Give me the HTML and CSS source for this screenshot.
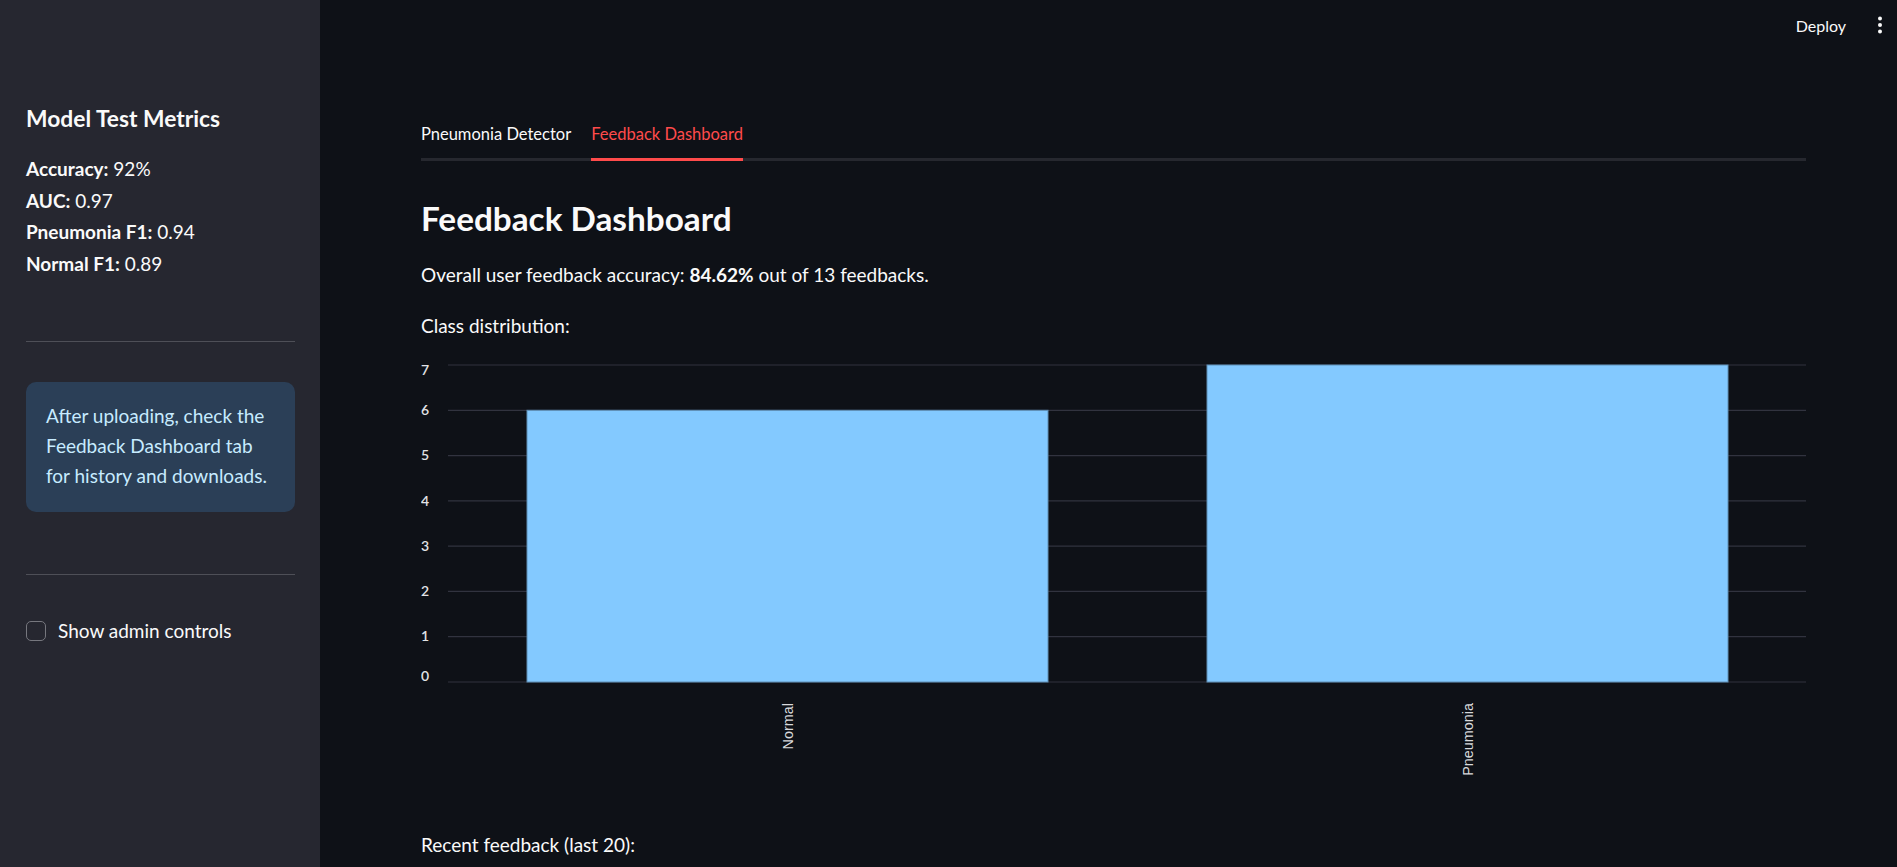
FILE: index.html
```html
<!DOCTYPE html>
<html lang="en">
<head>
<meta charset="utf-8">
<title>Feedback Dashboard</title>
<link rel="stylesheet" href="styles.css">
</head>
<body>
<div class="app">
  <aside class="sidebar">
    <h3 class="side-title">Model Test Metrics</h3>
    <div class="metrics">
      <div><b>Accuracy:</b> 92%</div>
      <div><b>AUC:</b> 0.97</div>
      <div><b>Pneumonia F1:</b> 0.94</div>
      <div><b>Normal F1:</b> 0.89</div>
    </div>
    <hr class="divider first">
    <div class="info">After uploading, check the Feedback Dashboard tab for history and downloads.</div>
    <hr class="divider second">
    <label class="check"><span class="box"></span><span>Show admin controls</span></label>
  </aside>
  <main class="main">
    <header class="header">
      <span class="deploy">Deploy</span>
      <svg class="menu" width="6" height="20" viewBox="0 0 6 20"><circle cx="3" cy="2.5" r="2" fill="#fafafa"/><circle cx="3" cy="9" r="2" fill="#fafafa"/><circle cx="3" cy="15.5" r="2" fill="#fafafa"/></svg>
    </header>
    <section class="content">
      <nav class="tabs">
        <span class="tab">Pneumonia Detector</span>
        <span class="tab active">Feedback Dashboard</span>
      </nav>
      <h3 class="title">Feedback Dashboard</h3>
      <p class="para p1">Overall user feedback accuracy: <b>84.62%</b> out of 13 feedbacks.</p>
      <p class="para p2">Class distribution:</p>
      <svg class="chart" width="1385" height="440" viewBox="0 0 1385 440">
        <g class="grid" stroke="#31333f" stroke-width="1.2">
          <line x1="27" x2="1385" y1="20" y2="20"/>
          <line x1="27" x2="1385" y1="65.3" y2="65.3"/>
          <line x1="27" x2="1385" y1="110.6" y2="110.6"/>
          <line x1="27" x2="1385" y1="155.9" y2="155.9"/>
          <line x1="27" x2="1385" y1="201.1" y2="201.1"/>
          <line x1="27" x2="1385" y1="246.4" y2="246.4"/>
          <line x1="27" x2="1385" y1="291.7" y2="291.7"/>
          <line x1="27" x2="1385" y1="337" y2="337"/>
        </g>
        <g class="ylabels" text-anchor="end">
          <text x="8" y="30">7</text>
          <text x="8" y="70">6</text>
          <text x="8" y="115.3">5</text>
          <text x="8" y="160.6">4</text>
          <text x="8" y="205.8">3</text>
          <text x="8" y="251.1">2</text>
          <text x="8" y="296.4">1</text>
          <text x="8" y="335.5">0</text>
        </g>
        <rect x="106" y="65.3" width="521" height="271.7" fill="#83c9ff" stroke="#5f8fb5" stroke-width="1"/>
        <rect x="786" y="20" width="521" height="317" fill="#83c9ff" stroke="#5f8fb5" stroke-width="1"/>
        <g class="xlabels" text-anchor="end">
          <text transform="translate(371.5 358) rotate(-90)">Normal</text>
          <text transform="translate(1052 358) rotate(-90)">Pneumonia</text>
        </g>
      </svg>
      <p class="para p3">Recent feedback (last 20):</p>
    </section>
  </main>
</div>
</body>
</html>
```
FILE: styles.css
```css
html, body {
  margin: 0;
  padding: 0;
  height: 100%;
}
body {
  background: #0e1117;
  color: #fafafa;
  font-family: Lato, "Noto Sans", sans-serif;
  overflow: hidden;
}
.app {
  display: flex;
  height: 867px;
}
.sidebar {
  width: 320px;
  flex: none;
  box-sizing: border-box;
  background: #262730;
  padding: 103px 25px 0 26px;
  display: flex;
  flex-direction: column;
}
.side-title {
  margin: 0;
  font-size: 22.8px;
  line-height: 30px;
  font-weight: 700;
}
.metrics {
  margin-top: 20px;
  font-size: 19px;
  line-height: 31.6px;
}
.metrics b { font-weight: 700; }
.divider {
  border: 0;
  height: 1px;
  background: #4e4f57;
  margin: 0;
}
.divider.first { margin-top: 62px; }
.info {
  margin-top: 40px;
  background: #2b3f57;
  color: #c7ebff;
  border-radius: 10px;
  padding: 19px 18px 21px 20px;
  font-size: 19px;
  line-height: 30px;
}
.divider.second { margin-top: 62px; }
.check {
  margin-top: 46px;
  display: flex;
  align-items: center;
  gap: 12px;
  font-size: 19px;
  line-height: 20px;
}
.check .box {
  width: 18px;
  height: 18px;
  border: 1px solid #76777e;
  border-radius: 5px;
  flex: none;
}
.main {
  flex: 1;
  display: flex;
  flex-direction: column;
  min-width: 0;
}
.header {
  height: 60px;
  display: flex;
  justify-content: flex-end;
  align-items: flex-start;
  gap: 31px;
  padding: 16px 14px 0 0;
  box-sizing: border-box;
}
.deploy {
  font-size: 16px;
  line-height: 20px;
}
.menu { display: block; }
.content {
  padding: 53px 91px 0 101px;
}
.tabs {
  display: flex;
  gap: 20px;
  border-bottom: 3px solid #26282f;
}
.tab {
  font-size: 16.5px;
  line-height: 24px;
  padding: 9px 0 12px;
  margin-bottom: -3px;
  border-bottom: 3px solid transparent;
}
.tab.active {
  color: #ff4b4b;
  border-bottom-color: #ff4b4b;
}
.title {
  margin: 37px 0 0;
  font-size: 33.3px;
  line-height: 40px;
  font-weight: 700;
}
.para {
  margin: 0;
  font-size: 19px;
  line-height: 28px;
}
.para b { font-weight: 700; }
.p1 { margin-top: 23px; }
.p2 { margin-top: 23px; }
.chart {
  display: block;
  margin-top: 5px;
}
.ylabels text {
  font-family: Lato, sans-serif;
  font-size: 14px;
  font-weight: 600;
  fill: #e2e3e6;
}
.xlabels text {
  font-family: "Liberation Sans", Arial, sans-serif;
  font-size: 14.4px;
  fill: #d8d9dc;
}
.p3 { margin-top: 46px; }
```
